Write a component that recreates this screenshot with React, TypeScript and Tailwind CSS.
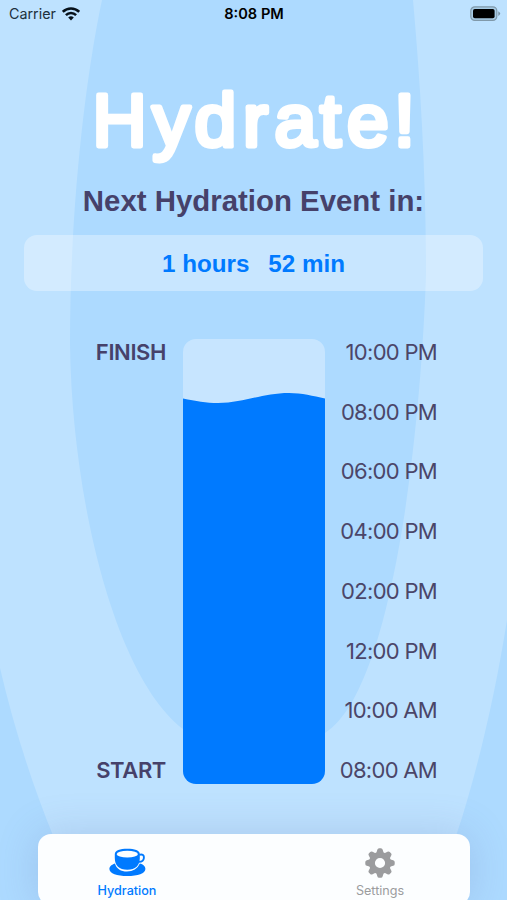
import React from "react";

const times = ["10:00 PM", "08:00 PM", "06:00 PM", "04:00 PM", "02:00 PM", "12:00 PM", "10:00 AM", "08:00 AM"];

function Backdrop() {
  return (
    <svg className="absolute inset-0 -z-10" width="507" height="900" viewBox="0 0 507 900" aria-hidden="true">
      <rect width="507" height="900" fill="#addaff" />
      <path d="M0 0H507V620C496 690 478 770 457 833L430 900H80L52 833C31 781 13 724 0 668Z" fill="#bee2ff" />
      <path
        d="M102 0C84 85 70 215 70 344C72 500 115 677 183 729C215 765 285 765 325 733C390 693 420 450 426 275C426 180 421 90 413 0Z"
        fill="#addaff"
      />
    </svg>
  );
}

function StatusBar() {
  return (
    <header className="grid h-7 shrink-0 grid-cols-3 items-center pr-1.5 pl-[9px] text-black">
      <div className="flex items-center gap-1.5">
        <span className="text-[14.3px] text-[#20303c]">Carrier</span>
        <svg className="-mt-px" width="18" height="14" viewBox="0 0 18 14" fill="none" stroke="#07111a" strokeWidth="2.5">
          <path d="M.8 4.8C5.4.3 12.6.3 17.2 4.8" />
          <path d="M3.9 8.2C6.7 5.3 11.3 5.3 14.1 8.2" />
          <path d="M6.2 10.6Q9 8.1 11.8 10.6L9 13.6Z" fill="#07111a" stroke="none" />
        </svg>
      </div>
      <span className="pt-px pr-[2px] text-center text-[14.6px] font-semibold">8:08 PM</span>
      <svg className="-mt-px justify-self-end" width="31" height="16" viewBox="0 0 31 16">
        <rect x=".8" y=".8" width="26" height="13.6" rx="4" fill="#a7cbe5" stroke="#8099aa" strokeWidth="1.2" />
        <rect x="3" y="3" width="21.6" height="9.2" rx="1.8" fill="#000" />
        <path d="M28.3 5.2Q32 7.6 28.3 10Z" fill="#7891a2" />
      </svg>
    </header>
  );
}

function Meter() {
  return (
    <svg className="h-[445px] w-[142px] rounded-[13px] bg-[#c7e5ff]" viewBox="0 0 142 445">
      <path d="M0 59.5C13 62 23 64 35 64C61 64 79 54 106 54C119 54 130 57 142 59.5V445H0Z" fill="#007aff" />
    </svg>
  );
}

function CupIcon() {
  return (
    <svg width="37" height="29" viewBox="0 0 37 29">
      <path
        d="M6 15.5C1.8 17 .4 19 .4 21C.4 25.5 8 28 18.3 28C28.8 28 36.4 25.5 36.4 21C36.4 18.3 34 16.1 30.8 15.6C28.5 20.8 23.9 23.6 18 23.6C12 23.6 7.2 20.6 6 15.5Z"
        fill="#007aff"
      />
      <path d="M5.8 6C5.8 2.5 11 .8 18.3 .8S30.8 2.5 30.8 6V10C30.8 17.5 26.5 21.8 18.3 21.8S5.8 17.5 5.8 10Z" fill="#007aff" />
      <ellipse cx="18.3" cy="6.2" rx="10.6" ry="3.4" fill="#fcfeff" />
      <path d="M30.3 6.8C33.6 5.8 35.2 7.5 34.9 10C34.6 12.8 32 14.1 28.9 13.8" fill="none" stroke="#007aff" strokeWidth="1.9" />
    </svg>
  );
}

function GearIcon() {
  return (
    <svg width="30" height="30" viewBox="-15 -15 30 30" fill="#9b9c9e">
      <circle r="8.1" fill="none" stroke="#9b9c9e" strokeWidth="6" />
      {[0, 45, 90, 135, 180, 225, 270, 315].map((angle) => (
        <path key={angle} d="M-4 -9L-2.7 -13.2Q-2.3 -14.7 -.9 -14.7H.9Q2.3 -14.7 2.7 -13.2L4 -9Z" transform={`rotate(${angle})`} />
      ))}
    </svg>
  );
}

export default function App() {
  return (
    <div className="relative isolate flex h-[900px] w-[507px] flex-col overflow-hidden font-['Inter',sans-serif] text-[#46416a]">
      <Backdrop />
      <StatusBar />
      <h1 className="mt-[50px] h-[95px] shrink-0">
        <svg width="507" height="95" viewBox="0 78 507 95">
          <text
            x="92.6 152.5 194.5 243 274.5 320 347 394"
            y="146.4"
            className="fill-white stroke-white font-['Liberation_Sans',Arial,sans-serif] text-[75px] font-normal"
            strokeWidth="4.9"
            strokeLinejoin="round"
          >
            Hydrate!
          </text>
        </svg>
      </h1>
      <h2 className="mt-2.5 h-9 shrink-0 text-center font-['Liberation_Sans',Arial,sans-serif] text-[29.4px] leading-9 font-bold whitespace-nowrap">
        Next Hydration Event in:
      </h2>
      <div className="mx-6 mt-4 flex h-[56px] shrink-0 items-center justify-center gap-[19px] rounded-[13px] bg-white/33 pt-0.5 font-['Liberation_Sans',Arial,sans-serif] text-[24.2px] font-bold text-[#007aff]">
        <span>1 hours</span>
        <span>52 min</span>
      </div>
      <main className="mt-12 flex h-[445px] shrink-0">
        <div className="-mt-px flex w-[183px] flex-col items-end justify-between pr-[17px] text-[22px] leading-7 font-semibold tracking-[-0.4px]">
          <span>FINISH</span>
          <span>START</span>
        </div>
        <Meter />
        <div className="-mt-px flex w-28 flex-col items-end justify-between text-[22px] leading-7 tracking-[-0.7px] text-[#4b4669]">
          {times.map((time) => (
            <span key={time} className="whitespace-nowrap">{time}</span>
          ))}
        </div>
      </main>
      <nav className="mx-[37.5px] mt-[50px] flex h-[71px] shrink-0 justify-between rounded-[13px] bg-[#fcfeff] text-[12.6px] shadow-[0_0_40px_rgba(90,110,170,0.22)]">
        <div className="flex w-[179px] flex-col items-center pt-3.5 font-medium text-[#007aff]">
          <CupIcon />
          <span className="mt-[5px]">Hydration</span>
        </div>
        <div className="flex w-[179px] flex-col items-center pt-3.5 text-[#9b9c9e]">
          <GearIcon />
          <span className="mt-1">Settings</span>
        </div>
      </nav>
    </div>
  );
}
